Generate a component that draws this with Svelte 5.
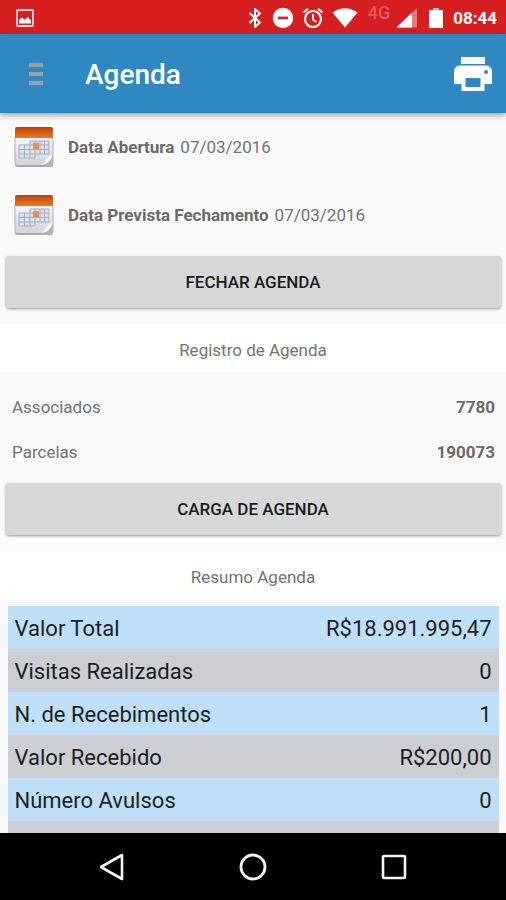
<script>
  const dates = [
    { label: 'Data Abertura', value: '07/03/2016' },
    { label: 'Data Prevista Fechamento', value: '07/03/2016' }
  ];
  const records = [
    { label: 'Associados', value: '7780' },
    { label: 'Parcelas', value: '190073' }
  ];
  const summary = [
    ['Valor Total', 'R$18.991.995,47'],
    ['Visitas Realizadas', '0'],
    ['N. de Recebimentos', '1'],
    ['Valor Recebido', 'R$200,00'],
    ['Número Avulsos', '0'],
    ['', '']
  ];
</script>

{#snippet calendar()}
  <svg class="calendar" viewBox="0 0 40 42" aria-hidden="true">
    <defs>
      <linearGradient id="cal-top" x1="0" y1="0" x2="0" y2="1">
        <stop offset="0" stop-color="#a8430c" />
        <stop offset="0.3" stop-color="#cb5510" />
        <stop offset="1" stop-color="#e8791f" />
      </linearGradient>
      <linearGradient id="cal-paper" x1="0" y1="0" x2="0" y2="1">
        <stop offset="0" stop-color="#f6f6f6" />
        <stop offset="1" stop-color="#d2d3d5" />
      </linearGradient>
    </defs>
    <rect x="1" y="3" width="38" height="38" rx="2" fill="#8d8d8d" opacity="0.7" />
    <path d="M1 11H39V37Q39 39.500 36.500 39.500H3.500Q1 39.500 1 37Z" fill="url(#cal-paper)" stroke="#a3a3a5" stroke-width="0.8" />
    <path d="M1 12V3Q1 1 3 1H37Q39 1 39 3V12Z" fill="url(#cal-top)" />
    <path d="M16 15H35V28H21V32H5V19H16Z" fill="#dde1ea" />
    <path d="M16 15H35M16 19H35M5 19H16M5 23.500H35M5 28H35M5 32H21M5 19V32M10.500 19V32M16 15V32M21 15V32M26 15V28M30.500 15V28M35 15V28" fill="none" stroke="#a5adc4" stroke-width="1" />
    <rect x="19" y="17" width="6" height="6" fill="#ec8d59" />
    <path d="M39 29Q37 37 27 39.500H36.500Q39 39.500 39 37Z" fill="#b3b4b6" />
    <path d="M38.500 28Q35 32 32 33Q32 36 27 39Q37 37.500 38.500 28Z" fill="#fff" />
  </svg>
{/snippet}

<div class="screen">
  <div class="status">
    <svg class="picture" width="18" height="18" viewBox="0 0 18 18">
      <rect x="1" y="1" width="16" height="16" rx="1" fill="none" stroke="#fbd5d2" stroke-width="1.8" />
      <path d="M3 14.500V11L6 8.500L8.500 10.500L12 8L15 11.500V14.500Z" fill="#fff" />
    </svg>
    <svg class="bluetooth" width="14" height="20" viewBox="0 0 14 20">
      <path d="M1.500 5L12 14.500L7 19V1L12 5.500L1.500 15" fill="none" stroke="#fff" stroke-width="2" />
    </svg>
    <svg class="dnd" width="22" height="22" viewBox="0 0 22 22">
      <circle cx="11" cy="11" r="10.200" fill="#fff" />
      <rect x="6" y="9.600" width="10" height="2.600" fill="#d61f21" />
    </svg>
    <svg class="alarm" width="22" height="22" viewBox="0 0 22 22">
      <circle cx="11" cy="12" r="8" fill="none" stroke="#fff" stroke-width="2.200" />
      <path d="M11 7V12.500L14.500 15M1.500 5.500L6 1.800M20.500 5.500L16 1.800" fill="none" stroke="#fff" stroke-width="2" />
    </svg>
    <svg class="wifi" width="26" height="20" viewBox="0 0 26 20">
      <path d="M0.500 4.500Q13 -4 25.500 4.500L13 19.500Z" fill="#fff" />
    </svg>
    <span class="network">4G</span>
    <svg class="signal" width="22" height="20" viewBox="0 0 22 20">
      <path d="M1 19.500L21 0V19.500Z" fill="#e8797a" />
      <path d="M0.500 19.500L16 4.500V19.500Z" fill="#fff" />
    </svg>
    <svg class="battery" width="14" height="20" viewBox="0 0 14 20">
      <path d="M4 0H10V2H14V20H0V2H4Z" fill="#fff" />
      <path d="M4 0H10V2H4Z" fill="#f0a5a5" />
    </svg>
    <span class="clock">08:44</span>
  </div>

  <header>
    <button class="icon menu" aria-label="Menu">
      <svg width="14" height="22" viewBox="0 0 14 22">
        <path d="M0 2H14M0 11H14M0 20H14" stroke="#9a9fa5" stroke-width="4" />
      </svg>
    </button>
    <h1>Agenda</h1>
    <button class="icon print" aria-label="Imprimir">
      <svg width="40" height="36" viewBox="0 0 40 36">
        <path d="M8 1H32V8H8Z" fill="#fff" />
        <path d="M7 9.500H33Q39 10 39 16V28H31.500V35H8.500V28H1V16Q1 10 7 9.500Z" fill="#fff" />
        <rect x="12.500" y="22" width="15" height="9" fill="#3088c1" />
        <circle cx="33" cy="16" r="2" fill="#3088c1" />
      </svg>
    </button>
  </header>

  <main>
    {#each dates as d}
      <div class="date">
        {@render calendar()}
        <strong>{d.label}</strong>
        <span>{d.value}</span>
      </div>
    {/each}
    <button class="action">FECHAR AGENDA</button>

    <h2>Registro de Agenda</h2>
    <dl>
      {#each records as r}
        <div class="record">
          <dt>{r.label}</dt>
          <dd>{r.value}</dd>
        </div>
      {/each}
    </dl>
    <button class="action">CARGA DE AGENDA</button>

    <h2>Resumo Agenda</h2>
    <table>
      <tbody>
        {#each summary as [label, value]}
          <tr>
            <th scope="row">{label}</th>
            <td>{value}</td>
          </tr>
        {/each}
      </tbody>
    </table>
  </main>

  <nav>
    <button class="icon" aria-label="Voltar">
      <svg width="28" height="28" viewBox="0 0 28 28">
        <path d="M24 2V26L3 14Z" fill="none" stroke="#f4f4f4" stroke-width="2.600" stroke-linejoin="round" />
      </svg>
    </button>
    <button class="icon" aria-label="Início">
      <svg width="28" height="28" viewBox="0 0 28 28">
        <circle cx="14" cy="14" r="12" fill="none" stroke="#f4f4f4" stroke-width="2.800" />
      </svg>
    </button>
    <button class="icon" aria-label="Recentes">
      <svg width="28" height="28" viewBox="0 0 28 28">
        <rect x="3" y="3" width="22" height="22" rx="1" fill="none" stroke="#f4f4f4" stroke-width="2.600" />
      </svg>
    </button>
  </nav>
</div>

<style>
  .screen {
    display: flex;
    flex-direction: column;
    height: 100vh;
    overflow: hidden;
    background: #fafafa;
    color: #737373;
    font-family: Roboto, 'Liberation Sans', sans-serif;
    font-size: 17px;
    line-height: 24px;
  }
  svg {
    display: block;
    flex: none;
  }
  h1,
  h2,
  dl,
  dd {
    margin: 0;
  }
  .icon {
    display: grid;
    place-items: center;
    padding: 0;
    border: 0;
    background: none;
  }
  .status {
    display: flex;
    flex: none;
    align-items: center;
    height: 34px;
    padding: 1px 9px 0 16px;
    box-sizing: border-box;
    background: #d61f21;
    color: #fff;
  }
  .picture {
    margin-right: auto;
  }
  .dnd {
    margin-left: 10px;
  }
  .alarm {
    margin-left: 8px;
  }
  .wifi {
    margin-left: 8px;
  }
  .network {
    align-self: flex-start;
    margin-left: 10px;
    color: #e8595a;
    font-size: 18px;
    font-weight: 500;
  }
  .signal {
    margin-left: 6px;
  }
  .battery {
    margin-left: 11px;
  }
  .clock {
    margin-left: 10px;
    font-weight: 700;
  }
  header {
    display: flex;
    z-index: 1;
    flex: none;
    align-items: center;
    height: 79px;
    padding: 0 13px 0 16px;
    background: #3088c1;
    box-shadow: 0 2px 6px rgba(0, 0, 0, 0.4);
  }
  .menu {
    width: 40px;
    height: 48px;
  }
  h1 {
    flex: 1;
    margin-left: 29px;
    padding-top: 2px;
    color: #fff;
    font-size: 28px;
    font-weight: 500;
  }
  main {
    flex: 1;
    min-height: 0;
    overflow: hidden;
  }
  .date {
    display: flex;
    align-items: center;
    height: 68px;
    padding: 0 14px;
  }
  .calendar {
    width: 40px;
    height: 42px;
    margin-right: 14px;
  }
  strong {
    margin-right: 6px;
    color: #6b6b6b;
    font-weight: 700;
  }
  .action {
    display: block;
    width: calc(100% - 11px);
    height: 52px;
    margin: 7px auto 16px;
    border: 0;
    border-radius: 3px;
    background: #d6d8d7;
    box-shadow: 0 1px 3px rgba(0, 0, 0, 0.4);
    color: #1c1c1c;
    font: inherit;
    font-weight: 500;
  }
  h2 {
    padding: 14px 0 10px;
    background: #fff;
    font-size: 17px;
    font-weight: 400;
    text-align: center;
  }
  dl {
    padding: 12px 0 2px;
  }
  .record {
    display: flex;
    align-items: center;
    justify-content: space-between;
    height: 45px;
    padding: 0 11px 0 12px;
  }
  dd {
    color: #6b6b6b;
    font-weight: 700;
  }
  table {
    width: calc(100% - 15px);
    margin: 7px auto 0;
    border-collapse: collapse;
    color: #1b1f23;
    font-size: 22px;
  }
  tr {
    height: 43px;
    background: #bfdff8;
  }
  tr:nth-child(even) {
    background: #cbced2;
  }
  th,
  td {
    padding: 2px 7px 0;
    font-weight: 400;
    text-align: left;
  }
  td {
    text-align: right;
  }
  nav {
    display: flex;
    flex: none;
    align-items: center;
    justify-content: center;
    gap: 113px;
    height: 67px;
    background: #000;
  }
</style>
